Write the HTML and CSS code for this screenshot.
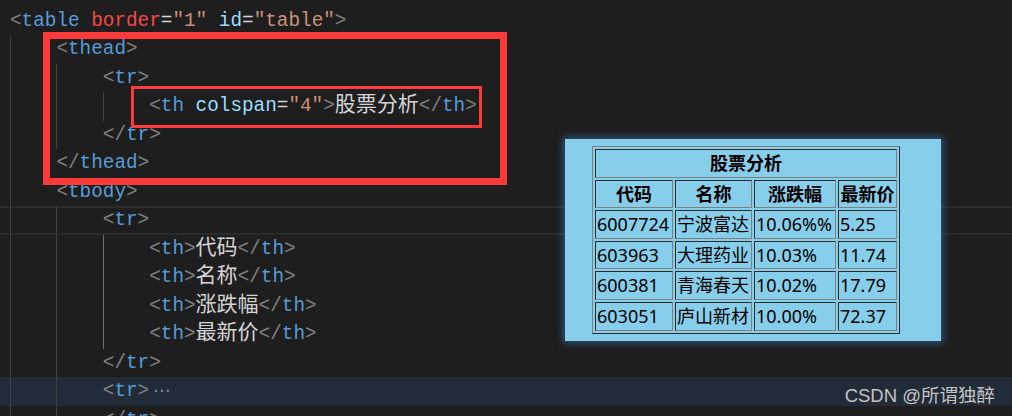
FILE: index.html
```html
<!DOCTYPE html>
<html lang="zh-CN">
<head>
<meta charset="utf-8">
<title>table thead</title>
<link rel="stylesheet" href="styles.css">
</head>
<body>
<div class="editor">
  <div class="code">
    <div class="ln"><span class="b">&lt;</span><span class="t">table</span> <span class="e">border</span><span class="p">=</span><span class="s">"1"</span> <span class="a">id</span><span class="p">=</span><span class="s">"table"</span><span class="b">&gt;</span></div>
    <div class="ln"><span class="ind"></span><span class="b">&lt;</span><span class="t">thead</span><span class="b">&gt;</span></div>
    <div class="ln"><span class="ind"></span><span class="ind"></span><span class="b">&lt;</span><span class="t">tr</span><span class="b">&gt;</span></div>
    <div class="ln"><span class="ind"></span><span class="ind"></span><span class="ind"></span><span class="b">&lt;</span><span class="t">th</span> <span class="a">colspan</span><span class="p">=</span><span class="s">"4"</span><span class="b">&gt;</span><span class="cjk">股票分析</span><span class="b">&lt;/</span><span class="t">th</span><span class="b">&gt;</span></div>
    <div class="ln"><span class="ind"></span><span class="ind"></span><span class="b">&lt;/</span><span class="t">tr</span><span class="b">&gt;</span></div>
    <div class="ln"><span class="ind"></span><span class="b">&lt;/</span><span class="t">thead</span><span class="b">&gt;</span></div>
    <div class="ln"><span class="ind"></span><span class="b">&lt;</span><span class="t">tbody</span><span class="b">&gt;</span></div>
    <div class="ln cur"><span class="ind"></span><span class="ind"></span><span class="b">&lt;</span><span class="t">tr</span><span class="b">&gt;</span></div>
    <div class="ln"><span class="ind"></span><span class="ind"></span><span class="ind act"></span><span class="b">&lt;</span><span class="t">th</span><span class="b">&gt;</span><span class="cjk">代码</span><span class="b">&lt;/</span><span class="t">th</span><span class="b">&gt;</span></div>
    <div class="ln"><span class="ind"></span><span class="ind"></span><span class="ind act"></span><span class="b">&lt;</span><span class="t">th</span><span class="b">&gt;</span><span class="cjk">名称</span><span class="b">&lt;/</span><span class="t">th</span><span class="b">&gt;</span></div>
    <div class="ln"><span class="ind"></span><span class="ind"></span><span class="ind act"></span><span class="b">&lt;</span><span class="t">th</span><span class="b">&gt;</span><span class="cjk">涨跌幅</span><span class="b">&lt;/</span><span class="t">th</span><span class="b">&gt;</span></div>
    <div class="ln"><span class="ind"></span><span class="ind"></span><span class="ind act"></span><span class="b">&lt;</span><span class="t">th</span><span class="b">&gt;</span><span class="cjk">最新价</span><span class="b">&lt;/</span><span class="t">th</span><span class="b">&gt;</span></div>
    <div class="ln"><span class="ind"></span><span class="ind"></span><span class="b">&lt;/</span><span class="t">tr</span><span class="b">&gt;</span></div>
    <div class="ln folded"><span class="ind"></span><span class="ind"></span><span class="b">&lt;</span><span class="t">tr</span><span class="b">&gt;</span><span class="fold">⋯</span></div>
    <div class="ln"><span class="ind"></span><span class="ind"></span><span class="b">&lt;/</span><span class="t">tr</span><span class="b">&gt;</span></div>
  </div>

  <div class="mark mark-outer"></div>
  <div class="mark mark-inner"></div>

  <div class="preview">
    <table class="stock">
      <thead>
        <tr><th colspan="4" class="title">股票分析</th></tr>
      </thead>
      <tbody>
        <tr>
          <th class="c1">代码</th>
          <th class="c2">名称</th>
          <th class="c3">涨跌幅</th>
          <th class="c4">最新价</th>
        </tr>
        <tr><td>6007724</td><td>宁波富达</td><td>10.06%%</td><td>5.25</td></tr>
        <tr><td>603963</td><td>大理药业</td><td>10.03%</td><td>11.74</td></tr>
        <tr><td>600381</td><td>青海春天</td><td>10.02%</td><td>17.79</td></tr>
        <tr><td>603051</td><td>庐山新材</td><td>10.00%</td><td>72.37</td></tr>
      </tbody>
    </table>
  </div>

  <div class="watermark">CSDN @所谓独醉</div>
</div>
</body>
</html>
```

FILE: styles.css
```css
html, body {
  margin: 0;
  padding: 0;
  background: #1e1e1e;
  overflow: hidden;
}

.editor {
  position: relative;
  width: 1012px;
  height: 416px;
  overflow: hidden;
  background: #1e1e1e;
}

.code {
  padding-top: 6.5px;
  font-family: "Liberation Mono", "DejaVu Sans Mono", monospace;
  font-size: 19.33px;
  color: #d4d4d4;
}

.ln {
  height: 28.5px;
  line-height: 28.5px;
  padding-left: 10px;
  white-space: pre;
  box-sizing: border-box;
}

.ln.cur {
  box-shadow: inset 0 2px 0 #2b2b2b, inset 0 -2px 0 #2b2b2b;
}

.ln.folded {
  background: #212c38;
}

.ind {
  display: inline-block;
  width: 46.4px;
  height: 28.5px;
  vertical-align: top;
  border-left: 1px solid #404040;
  box-sizing: border-box;
}

.ind.act {
  border-left-color: #707070;
}

.b { color: #808080; }
.t { color: #569cd6; }
.a { color: #9cdcfe; }
.e { color: #f44747; }
.s { color: #ce9178; }
.p { color: #d4d4d4; }

.cjk {
  font-family: "Noto Sans CJK SC", sans-serif;
  font-size: 21px;
  line-height: 0;
  color: #d4d4d4;
}

.fold {
  font-family: "DejaVu Sans", sans-serif;
  font-size: 17px;
  line-height: 0;
  color: #8c8c8c;
  margin-left: 4px;
}

/* red annotation frames */
.mark {
  position: absolute;
  box-sizing: border-box;
  border-style: solid;
  border-color: #fd3a3a;
}

.mark-outer {
  left: 43px;
  top: 32px;
  width: 464px;
  height: 153px;
  border-width: 7px;
}

.mark-inner {
  left: 131px;
  top: 86px;
  width: 351px;
  height: 42px;
  border-width: 3px;
}

/* rendered preview */
.preview {
  position: absolute;
  left: 565px;
  top: 139px;
  width: 376px;
  height: 202px;
  box-sizing: border-box;
  padding: 7px 0 0 27px;
  background: #87ceeb;
  box-shadow: 0 0 7px 2px rgba(60, 130, 210, 0.55);
}

.stock {
  border: 1px outset grey;
  border-collapse: separate;
  border-spacing: 2px;
  font-family: "Noto Sans", "Noto Sans CJK SC", sans-serif;
  font-size: 18px;
  color: #000;
}

.stock th,
.stock td {
  border: 1px inset grey;
  padding: 1px;
  line-height: 24.6px;
  box-sizing: border-box;
  white-space: nowrap;
}

.stock th {
  font-weight: bold;
  text-align: center;
}

.stock td {
  text-align: left;
}

.c1 { width: 78px; }
.c2 { width: 77px; }
.c3 { width: 82px; }
.c4 { width: 59px; }

.watermark {
  position: absolute;
  right: 17px;
  top: 384px;
  font-family: "Liberation Sans", "Noto Sans CJK SC", sans-serif;
  font-size: 18.5px;
  line-height: 24px;
  color: #c4c4c4;
}
```
